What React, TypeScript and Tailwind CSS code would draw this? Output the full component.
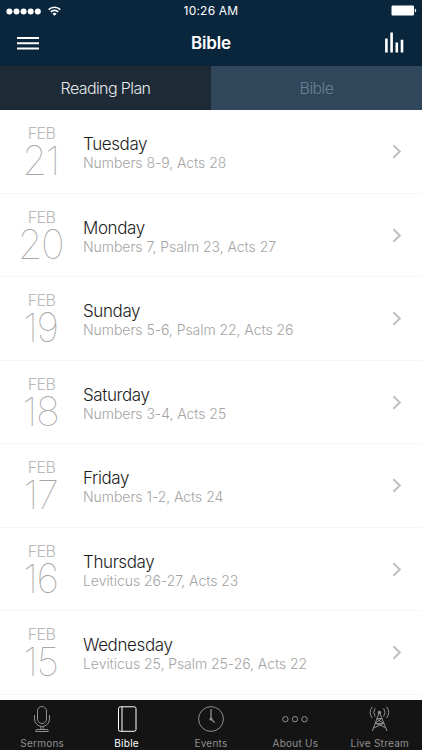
import type { ReactNode } from 'react'

interface Reading {
  day: string
  weekday: string
  passages: string
}

interface NavItem {
  label: string
  icon: ReactNode
  active?: boolean
}

const readings: Reading[] = [
  { day: '21', weekday: 'Tuesday', passages: 'Numbers 8-9, Acts 28' },
  { day: '20', weekday: 'Monday', passages: 'Numbers 7, Psalm 23, Acts 27' },
  { day: '19', weekday: 'Sunday', passages: 'Numbers 5-6, Psalm 22, Acts 26' },
  { day: '18', weekday: 'Saturday', passages: 'Numbers 3-4, Acts 25' },
  { day: '17', weekday: 'Friday', passages: 'Numbers 1-2, Acts 24' },
  { day: '16', weekday: 'Thursday', passages: 'Leviticus 26-27, Acts 23' },
  { day: '15', weekday: 'Wednesday', passages: 'Leviticus 25, Psalm 25-26, Acts 22' },
]

const navItems: NavItem[] = [
  {
    label: 'Sermons',
    icon: (
      <>
        <rect x="9.5" y="1.5" width="9" height="17" rx="4.5" />
        <path d="M6.5 10v4a7.5 7.5 0 0 0 15 0v-4M12.8 21.5v3M15.2 21.5v3M7.8 26.5v-1q0-1 1-1h10.4q1 0 1 1v1z" />
      </>
    ),
  },
  {
    label: 'Bible',
    active: true,
    icon: (
      <>
        <rect x="5.5" y="1.8" width="17.5" height="24.5" rx="1.8" />
        <path d="M9 1.8v24.5" />
      </>
    ),
  },
  {
    label: 'Events',
    icon: (
      <>
        <circle cx="14" cy="14" r="12.4" />
        <path d="M14 4v10l3.8 3.6" strokeWidth="1.3" />
        <circle cx="14" cy="14" r="1.6" fill="currentColor" stroke="none" />
      </>
    ),
  },
  {
    label: 'About Us',
    icon: (
      <>
        <circle cx="4.4" cy="14.2" r="2.7" />
        <circle cx="14" cy="14.2" r="2.7" />
        <circle cx="23.5" cy="14.2" r="2.7" />
      </>
    ),
  },
  {
    label: 'Live Stream',
    icon: (
      <>
        <circle cx="13.4" cy="7.4" r="1.7" fill="currentColor" stroke="none" />
        <path d="M13 8L6.4 26M13.8 8L21 26M11 13.5h4.8M9.6 17.8l6.2-4.3M9.2 18.4h8.6l-6.4-4M7.6 23l10.2-4.6M19.6 22.6l-10.2-4.4" />
        <path d="M9.2 3.2q-3 4.2 0 8.4M17.6 3.2q3 4.2 0 8.4M6.2 1.8q-4.2 5.6 0 11.2M20.6 1.8q4.2 5.6 0 11.2" />
      </>
    ),
  },
]

function StatusBar() {
  return (
    <div className="grid h-[22px] grid-cols-3 items-center px-1.5 text-white">
      <div className="flex items-center gap-[7px]">
        <svg width="35" height="7" viewBox="0 0 35 7" fill="currentColor">
          {[3.4, 10.5, 17.6, 24.7, 31.8].map((cx) => (
            <circle key={cx} cx={cx} cy="3.5" r="3" />
          ))}
        </svg>
        <svg className="mt-[-1px]" width="13" height="10" viewBox="0 0 13 10" fill="none" stroke="currentColor" strokeWidth="1.6">
          <path d="M.7 3.6a8.2 8.2 0 0 1 11.6 0M2.8 5.9a5.2 5.2 0 0 1 7.4 0" />
          <path d="M6.5 9.8L4.4 7.7a3 3 0 0 1 4.2 0z" fill="currentColor" stroke="none" />
        </svg>
      </div>
      <span className="text-center text-[12px] tracking-[0.2px] whitespace-nowrap">10:26 AM</span>
      <svg className="mt-[-1px] mr-[-1px] justify-self-end" width="26" height="11" viewBox="0 0 26 11" fill="currentColor">
        <rect x="0.5" y="0.5" width="22.5" height="10" rx="1.2" />
        <path d="M23.8 3.6q1.4 0.4 1.4 1.9t-1.4 1.9z" />
      </svg>
    </div>
  )
}

function Header() {
  return (
    <header className="flex h-[66px] flex-col bg-[#0a263d]">
      <StatusBar />
      <div className="grid h-[42px] grid-cols-3 items-center px-[17px] text-white">
        <svg width="22" height="14" viewBox="0 0 22 14" fill="none" stroke="currentColor" strokeWidth="2">
          <path d="M0 2h22M0 7.2h22M0 12.4h22" />
        </svg>
        <h1 className="text-center text-[17px] leading-none font-semibold tracking-[-0.2px]">Bible</h1>
        <svg className="justify-self-end" width="20" height="22" viewBox="0 0 20 22" fill="none" stroke="currentColor" strokeWidth="2.6">
          <path d="M1.4 20.6V6.6M6.6 20.6V.4M11.8 20.6V10.6M17 20.6V7.8" />
        </svg>
      </div>
    </header>
  )
}

function ReadingRow({ day, weekday, passages }: Reading) {
  return (
    <li className="flex h-[83.5px] border-b border-[#f6f6f6]">
      <div className="flex w-[83px] flex-col items-center pt-[13px]">
        <span className="text-[16px] leading-5 font-light tracking-[-0.6px] text-[#b8b8b8]">FEB</span>
        <span className="mr-[2px] text-[40px] leading-[36px] font-thin tracking-[-1.4px] text-[#6c6c6c] opacity-60">{day}</span>
      </div>
      <div className="flex-1 pt-[24px]">
        <h2 className="text-[17px] leading-5 font-light tracking-[-0.4px] text-[#1c1c1c]">{weekday}</h2>
        <p className="text-[14px] leading-[18px] font-light tracking-[-0.05px] whitespace-nowrap text-[#a4a4a4]">{passages}</p>
      </div>
      <svg className="mt-[34px] mr-5" width="10" height="15" viewBox="0 0 10 15" fill="none" stroke="#c0c0c0" strokeWidth="2">
        <path d="M1.4 1.2L7.8 7.5L1.4 13.8" />
      </svg>
    </li>
  )
}

export default function App() {
  return (
    <div className="flex h-[750px] w-[422px] flex-col overflow-hidden bg-white font-['Inter',sans-serif] antialiased">
      <Header />
      <div className="grid h-11 grid-cols-2 text-center text-[16px] leading-[44px] font-light tracking-[-0.6px]">
        <div className="bg-[#1e2a35] text-[#e4e8ec]">Reading Plan</div>
        <div className="bg-[#2f465b] text-[#6c7f90]">Bible</div>
      </div>
      <ul className="h-[590px] shrink-0 overflow-hidden">
        {readings.map((reading) => (
          <ReadingRow key={reading.day} {...reading} />
        ))}
      </ul>
      <nav className="grid h-[50px] grid-cols-5 bg-[#141414]">
        {navItems.map((item) => (
          <div
            key={item.label}
            className={`flex flex-col items-center pt-[5px] ${item.active ? 'text-white' : 'text-[#8f8f8f]'}`}
          >
            <svg width="28" height="28" viewBox="0 0 28 28" fill="none" stroke="currentColor" strokeWidth="1">
              {item.icon}
            </svg>
            <span className="mt-[4px] text-[10px] leading-3 tracking-[0.25px] whitespace-nowrap">{item.label}</span>
          </div>
        ))}
      </nav>
    </div>
  )
}
